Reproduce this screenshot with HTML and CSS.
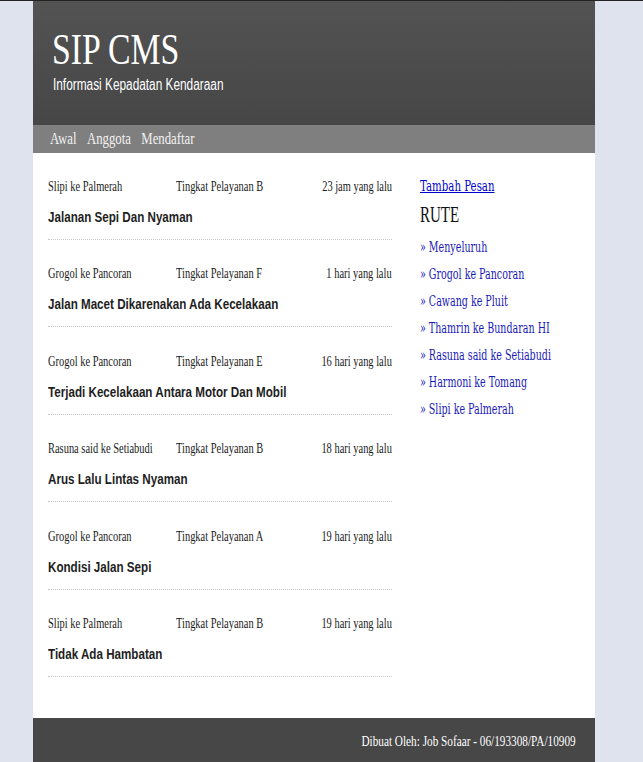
FILE: index.html
```html
<!DOCTYPE html>
<html>
<head>
<meta charset="utf-8">
<title>SIP CMS</title>
<link rel="stylesheet" href="styles.css">
</head>
<body>
<div class="page">
  <header class="header">
    <h1 class="site-title"><span class="sq">SIP CMS</span></h1>
    <p class="site-sub"><span class="sq">Informasi Kepadatan Kendaraan</span></p>
  </header>
  <nav class="nav">
    <span class="sq nav-links"><a href="#">Awal</a><a href="#">Anggota</a><a href="#">Mendaftar</a></span>
  </nav>
  <div class="main">
    <div class="posts">
      <div class="post">
        <div class="meta"><span class="route"><span class="sq">Slipi ke Palmerah</span></span><span class="level"><span class="sq">Tingkat Pelayanan B</span></span><span class="time"><span class="sq sq-r">23 jam yang lalu</span></span></div>
        <h2 class="post-title"><span class="sq">Jalanan Sepi Dan Nyaman</span></h2>
      </div>
      <div class="post">
        <div class="meta"><span class="route"><span class="sq">Grogol ke Pancoran</span></span><span class="level"><span class="sq">Tingkat Pelayanan F</span></span><span class="time"><span class="sq sq-r">1 hari yang lalu</span></span></div>
        <h2 class="post-title"><span class="sq">Jalan Macet Dikarenakan Ada Kecelakaan</span></h2>
      </div>
      <div class="post">
        <div class="meta"><span class="route"><span class="sq">Grogol ke Pancoran</span></span><span class="level"><span class="sq">Tingkat Pelayanan E</span></span><span class="time"><span class="sq sq-r">16 hari yang lalu</span></span></div>
        <h2 class="post-title"><span class="sq">Terjadi Kecelakaan Antara Motor Dan Mobil</span></h2>
      </div>
      <div class="post">
        <div class="meta"><span class="route"><span class="sq">Rasuna said ke Setiabudi</span></span><span class="level"><span class="sq">Tingkat Pelayanan B</span></span><span class="time"><span class="sq sq-r">18 hari yang lalu</span></span></div>
        <h2 class="post-title"><span class="sq">Arus Lalu Lintas Nyaman</span></h2>
      </div>
      <div class="post">
        <div class="meta"><span class="route"><span class="sq">Grogol ke Pancoran</span></span><span class="level"><span class="sq">Tingkat Pelayanan A</span></span><span class="time"><span class="sq sq-r">19 hari yang lalu</span></span></div>
        <h2 class="post-title"><span class="sq">Kondisi Jalan Sepi</span></h2>
      </div>
      <div class="post">
        <div class="meta"><span class="route"><span class="sq">Slipi ke Palmerah</span></span><span class="level"><span class="sq">Tingkat Pelayanan B</span></span><span class="time"><span class="sq sq-r">19 hari yang lalu</span></span></div>
        <h2 class="post-title"><span class="sq">Tidak Ada Hambatan</span></h2>
      </div>
    </div>
    <aside class="sidebar">
      <a class="add-link sq" href="#">Tambah Pesan</a>
      <h3 class="side-title"><span class="sq">RUTE</span></h3>
      <ul class="routes">
        <li><a class="sq" href="#">» Menyeluruh</a></li>
        <li><a class="sq" href="#">» Grogol ke Pancoran</a></li>
        <li><a class="sq" href="#">» Cawang ke Pluit</a></li>
        <li><a class="sq" href="#">» Thamrin ke Bundaran HI</a></li>
        <li><a class="sq" href="#">» Rasuna said ke Setiabudi</a></li>
        <li><a class="sq" href="#">» Harmoni ke Tomang</a></li>
        <li><a class="sq" href="#">» Slipi ke Palmerah</a></li>
      </ul>
    </aside>
  </div>
  <footer class="footer"><span class="sq sq-r">Dibuat Oleh: Job Sofaar - 06/193308/PA/10909</span></footer>
</div>
</body>
</html>
```

FILE: styles.css
```css
html, body {
  margin: 0;
  padding: 0;
}
body {
  background: #dfe3ee;
  border-top: 1px solid #222;
  font-family: "Liberation Serif", "Times New Roman", serif;
}
.sq {
  display: inline-block;
  white-space: nowrap;
  transform: scaleX(0.75);
  transform-origin: 0 50%;
}
.sq-r {
  transform-origin: 100% 50%;
}
.page {
  width: 562px;
  margin-left: 33px;
}
.header {
  height: 124px;
  box-sizing: border-box;
  background: linear-gradient(#535353, #464646);
  padding: 26px 0 0 19px;
  color: #fff;
}
.site-title {
  margin: 0;
  font-family: "Liberation Serif", serif;
  font-weight: normal;
  font-size: 45px;
  line-height: 44px;
}
.site-sub {
  margin: 5px 0 0 1px;
  font-family: "Liberation Sans", Arial, sans-serif;
  font-size: 16px;
  line-height: 18px;
}
.site-sub .sq {
  transform: scaleX(0.74);
}
.nav {
  height: 28px;
  background: #7f7f7f;
  padding-left: 17px;
  display: flex;
  align-items: center;
}
.nav-links a {
  color: #f2f2f2;
  text-decoration: none;
  font-size: 17px;
  margin-right: 14px;
}
.main {
  background: #fff;
  height: 565px;
  display: flex;
  gap: 28px;
  padding-top: 23px;
  box-sizing: border-box;
}
.posts {
  width: 344px;
  flex: 0 0 344px;
  margin-left: 15px;
}
.post {
  border-bottom: 1px dotted #c8c8c8;
  padding-bottom: 11px;
  margin-bottom: 23.4px;
}
.meta {
  display: flex;
  font-size: 14.5px;
  line-height: 20px;
  color: #1a1a1a;
}
.meta .sq {
  transform: scaleX(0.72);
}
.meta .sq-r {
  transform-origin: 100% 50%;
}
.route {
  flex: 0 0 128px;
  min-width: 0;
}
.level {
  flex: 1 1 auto;
  min-width: 0;
}
.time {
  flex: 0 0 auto;
  text-align: right;
}
.post-title {
  margin: 10px 0 0;
  font-family: "Liberation Sans", Arial, sans-serif;
  font-weight: bold;
  font-size: 15px;
  line-height: 22px;
  color: #1e1e1e;
}
.post-title .sq {
  transform: scaleX(0.775);
}
.sidebar {
  display: flex;
  flex-direction: column;
  align-items: flex-start;
}
.add-link {
  color: #0000cc;
  font-family: "DejaVu Serif", "Liberation Serif", serif;
  font-size: 15px;
  line-height: 20px;
  text-decoration: underline;
}
.sidebar .add-link {
  transform: scaleX(0.68);
}
.side-title {
  margin: 5px 0 0;
  font-weight: normal;
  font-size: 24px;
  line-height: 26px;
  color: #111;
}
.side-title .sq {
  transform: scaleX(0.625);
}
.routes {
  list-style: none;
  margin: 7px 0 0;
  padding: 0;
}
.routes li {
  line-height: 27px;
  font-size: 14px;
  font-family: "DejaVu Serif", "Liberation Serif", serif;
}
.routes a {
  color: #1a1ab8;
  text-decoration: none;
}
.routes .sq {
  transform: scaleX(0.68);
}
.footer {
  height: 44px;
  background: #474747;
  color: #fff;
  text-align: right;
  padding-right: 19px;
  font-size: 15px;
  line-height: 46px;
}
```
